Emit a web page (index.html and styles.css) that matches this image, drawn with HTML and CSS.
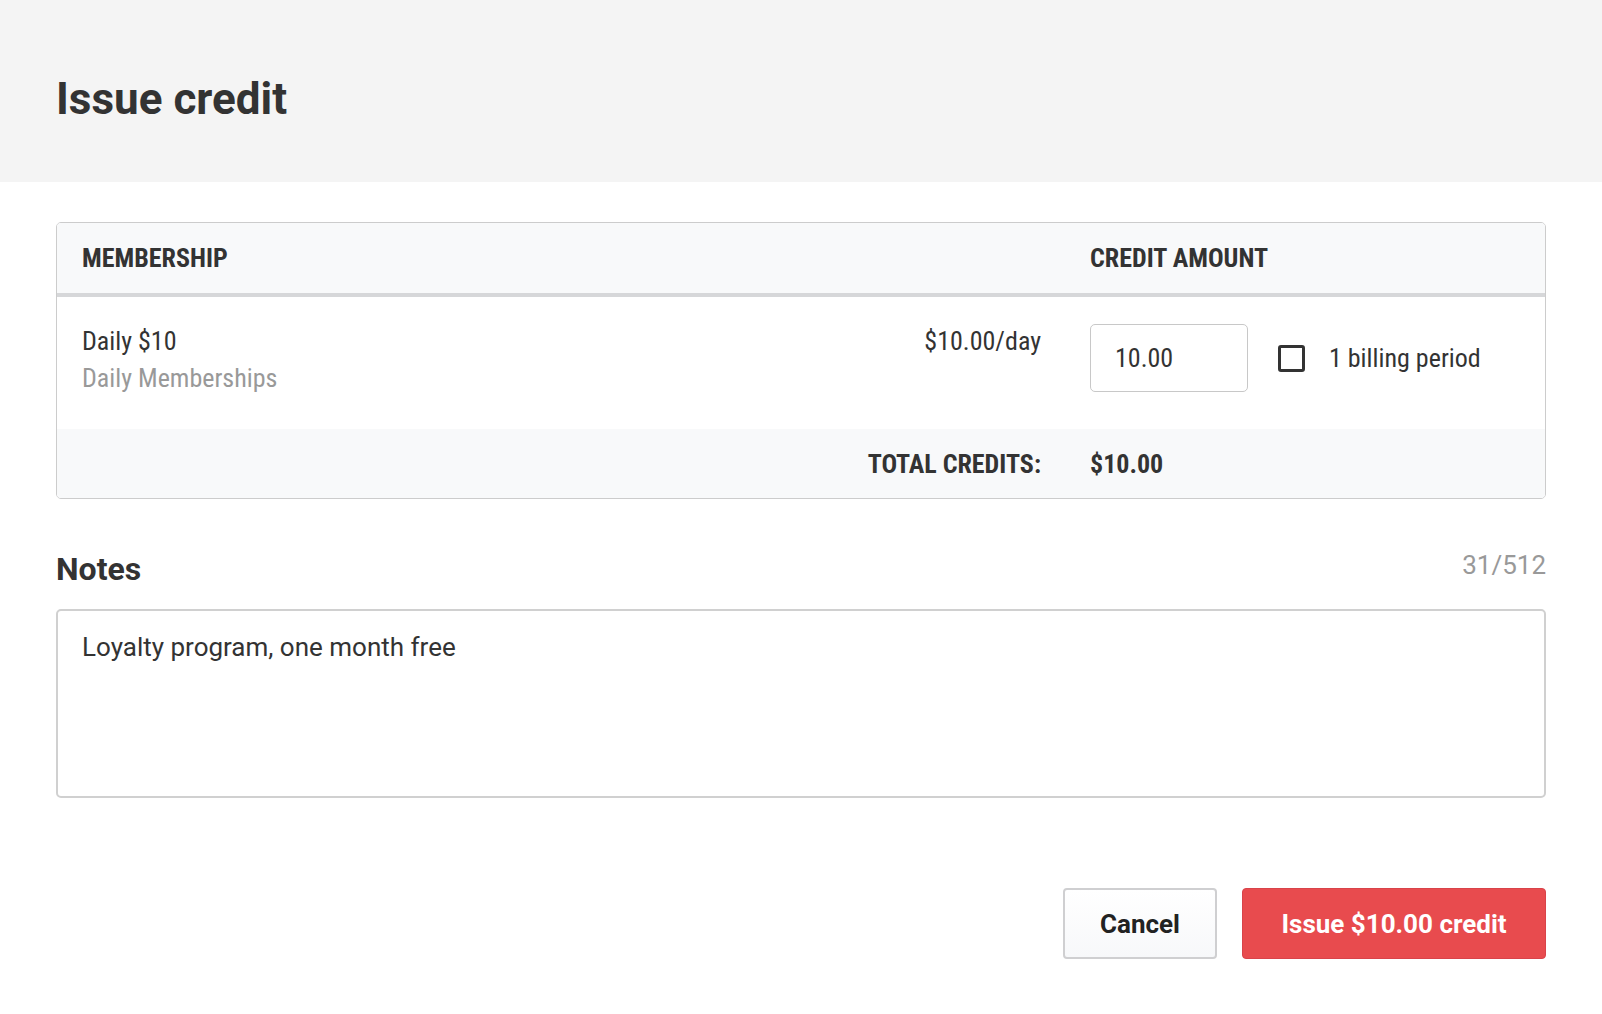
FILE: index.html
```html
<!DOCTYPE html>
<html lang="en">
<head>
<meta charset="utf-8">
<title>Issue credit</title>
<link rel="stylesheet" href="styles.css">
</head>
<body>
<header class="page-head">
  <h1 class="title">Issue credit</h1>
</header>
<main class="content">
  <section class="card">
    <div class="row row-head">
      <div class="cell col-a">MEMBERSHIP</div>
      <div class="cell col-b">CREDIT AMOUNT</div>
    </div>
    <div class="row row-body">
      <div class="cell col-a item">
        <div class="item-info">
          <div class="item-name">Daily $10</div>
          <div class="item-sub">Daily Memberships</div>
        </div>
        <div class="item-price">$10.00/day</div>
      </div>
      <div class="cell col-b amount">
        <div class="amount-input">10.00</div>
        <label class="check"><span class="box"></span><span class="check-label">1 billing period</span></label>
      </div>
    </div>
    <div class="row row-foot">
      <div class="cell col-a total-label">TOTAL CREDITS:</div>
      <div class="cell col-b total-value">$10.00</div>
    </div>
  </section>

  <section class="notes">
    <div class="notes-head">
      <h2 class="notes-title">Notes</h2>
      <span class="counter">31/512</span>
    </div>
    <div class="notes-box">Loyalty program, one month free</div>
  </section>

  <div class="actions">
    <button class="btn btn-cancel">Cancel</button>
    <button class="btn btn-primary">Issue $10.00 credit</button>
  </div>
</main>
</body>
</html>
```
FILE: styles.css
```css
* { box-sizing: border-box; }
html, body { margin: 0; padding: 0; }
body {
  width: 1602px;
  height: 1014px;
  background: #fff;
  color: #333;
  font-family: Roboto, "Liberation Sans", sans-serif;
  overflow: hidden;
}
.page-head {
  height: 182px;
  background: #f4f4f4;
  display: flex;
  align-items: center;
  padding: 0 56px;
}
.title {
  margin: 0;
  font-size: 44px;
  font-weight: 700;
  color: #333;
  padding-top: 16px;
}
.content {
  padding: 40px 56px 0;
}
.card {
  border: 1px solid #cccccc;
  border-radius: 5px;
  overflow: hidden;
  font-family: "Roboto Condensed", Roboto, sans-serif;
  font-stretch: 75%;
  font-size: 26px;
}
.row { display: flex; }
.cell { padding: 0 24px 0 25px; }
.col-a { width: 1008px; }
.col-b { flex: 1; }
.row-head {
  height: 74px;
  background: #f8f9fa;
  border-bottom: 4px solid #d6d7d9;
  align-items: center;
  font-weight: 700;
}
.row-body {
  height: 132px;
  padding-top: 29px;
}
.item {
  display: flex;
  justify-content: space-between;
  align-items: flex-start;
}
.item-name { line-height: 30px; color: #333; }
.item-sub { line-height: 30px; margin-top: 7px; color: #999; }
.item-price { line-height: 30px; }
.amount {
  display: flex;
  align-items: center;
  align-self: flex-start;
  margin-top: -2px;
}
.amount-input {
  width: 158px;
  height: 68px;
  border: 1.5px solid #c8c8c8;
  border-radius: 5px;
  padding: 0 24px;
  display: flex;
  align-items: center;
}
.check {
  display: flex;
  align-items: center;
  margin-left: 30px;
}
.box {
  width: 27px;
  height: 27px;
  border: 3px solid #333;
  border-radius: 3px;
  display: inline-block;
}
.check-label { margin-left: 24px; }
.row-foot {
  height: 69px;
  background: #f8f9fa;
  align-items: center;
  font-weight: 700;
}
.total-label { text-align: right; }
.notes { margin-top: 42px; }
.notes-head {
  display: flex;
  justify-content: space-between;
  align-items: center;
  height: 50px;
}
.notes-title {
  margin: 0;
  font-size: 32px;
  font-weight: 700;
  padding-top: 5px;
}
.counter {
  font-size: 26px;
  color: #999;
  margin-bottom: 2px;
}
.notes-box {
  margin-top: 18px;
  height: 189px;
  border: 2px solid #d0d0d0;
  border-radius: 5px;
  padding: 20px 24px;
  font-size: 26px;
  line-height: 32px;
  color: #333;
}
.actions {
  display: flex;
  justify-content: flex-end;
  gap: 25px;
  margin-top: 90px;
}
.btn {
  height: 71px;
  border-radius: 4px;
  font-family: Roboto, sans-serif;
  font-size: 26px;
  font-weight: 700;
  cursor: pointer;
}
.btn-cancel {
  width: 154px;
  background: linear-gradient(#ffffff, #f7f8fa);
  border: 2px solid #cfcfd1;
  color: #222;
}
.btn-primary {
  width: 304px;
  background: #e84b4e;
  border: 1px solid #d9434a;
  color: #fff;
}
```
